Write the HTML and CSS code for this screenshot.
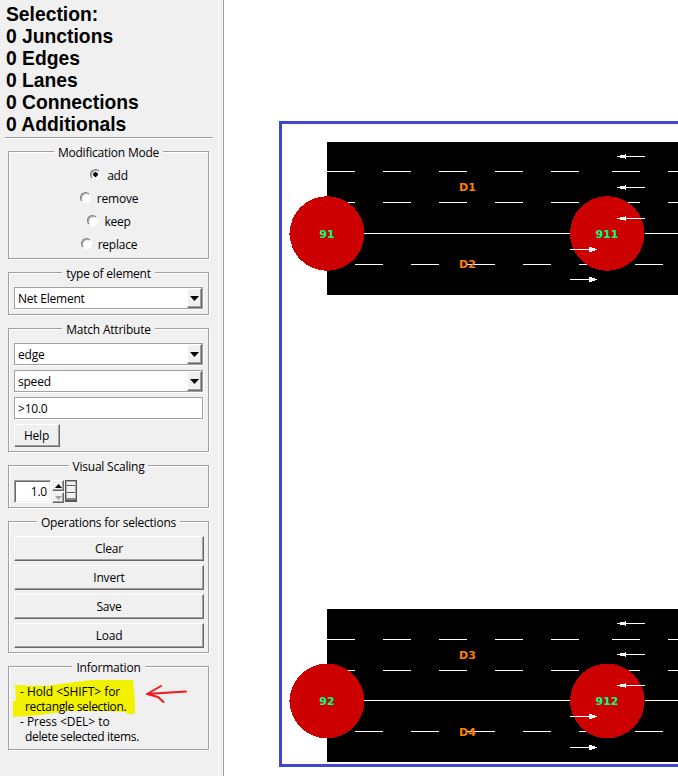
FILE: index.html
```html
<!DOCTYPE html>
<html lang="en">
<head>
<meta charset="utf-8">
<title>Selection</title>
<link rel="stylesheet" href="styles.css">
</head>
<body>
<div class="app">
  <aside class="sidebar">
    <div class="summary">
      <div>Selection:</div>
      <div>0 Junctions</div>
      <div>0 Edges</div>
      <div>0 Lanes</div>
      <div>0 Connections</div>
      <div>0 Additionals</div>
    </div>

    <section class="group mode">
      <h2><span>Modification Mode</span></h2>
      <div class="radio"><i class="dot on"></i><span>add</span></div>
      <div class="radio"><i class="dot"></i><span>remove</span></div>
      <div class="radio"><i class="dot"></i><span>keep</span></div>
      <div class="radio"><i class="dot"></i><span>replace</span></div>
    </section>

    <section class="group type">
      <h2><span>type of element</span></h2>
      <div class="field"><span>Net Element</span><b class="drop"><svg width="9" height="5"><path d="M0 0h9L4.5 5z"/></svg></b></div>
    </section>

    <section class="group match">
      <h2><span>Match Attribute</span></h2>
      <div class="field"><span>edge</span><b class="drop"><svg width="9" height="5"><path d="M0 0h9L4.5 5z"/></svg></b></div>
      <div class="field"><span>speed</span><b class="drop"><svg width="9" height="5"><path d="M0 0h9L4.5 5z"/></svg></b></div>
      <div class="field"><span>&gt;10.0</span></div>
      <div class="button help">Help</div>
    </section>

    <section class="group scaling">
      <h2><span>Visual Scaling</span></h2>
      <div class="spinner">
        <div class="number">1.0</div>
        <div class="steps">
          <b><svg width="7" height="4"><path d="M0 4h7L3.5 0z"/></svg></b>
          <b class="off"><svg width="7" height="4"><path d="M0 0h7L3.5 4z"/></svg></b>
        </div>
        <div class="wheel"><svg width="12" height="22" shape-rendering="crispEdges">
          <rect width="12" height="22" fill="#555"/>
          <rect x="2" y="2" width="8" height="16" fill="#f0f0f0"/>
          <path fill="#aaa" d="M1 1h10v1H1zM10 2h1v18h-1zM1 2h1v18H1z"/>
          <path fill="#555" d="M2 5h8v1H2zM2 12h8v1H2z"/>
          <path fill="#fff" d="M2 6h8v1H2zM2 13h8v1H2z"/>
          <path fill="#888" d="M1 18h10v2H1z"/>
        </svg></div>
      </div>
    </section>

    <section class="group ops">
      <h2><span>Operations for selections</span></h2>
      <div class="button">Clear</div>
      <div class="button">Invert</div>
      <div class="button">Save</div>
      <div class="button">Load</div>
    </section>

    <section class="group info">
      <h2><span>Information</span></h2>
      <svg class="marks" width="190" height="48" viewBox="10 680 190 48">
        <path fill="#f2f200" d="M15 685l31 1 21-3 25-3 41 0 2 21v13l-8 0-1-2-21-1-37 0-28 4-27 2V702l3-2z"/>
        <path fill="none" stroke="#f0181c" stroke-width="2" stroke-linecap="round" stroke-linejoin="round" d="M186 691.500L170 692.500L147 694M161 686L147 694L158 697L163.500 702"/>
      </svg>
      <p>- Hold &lt;SHIFT&gt; for</p>
      <p class="in">rectangle selection.</p>
      <p>- Press &lt;DEL&gt; to</p>
      <p class="in">delete selected items.</p>
    </section>
  </aside>

  <main class="network">
    <svg width="454" height="776" viewBox="224 0 454 776">
      <defs>
        <path id="left" d="M0 0h28v1H0zM3-1h6v3H3zM8-2h1v5H8z"/>
        <path id="right" d="M0 0h27v1H0zM19-2h3v1h3v3h-3v1h-3z"/>
        <path id="lanes" d="M327 29h28v1h-28zM383 29h28v1h-28zM439 29h28v1h-28zM495 29h28v1h-28zM551 29h28v1h-28zM612 29h28v1h-28zM668 29h28v1h-28zM327 60h28v1h-28zM383 60h28v1h-28zM439 60h28v1h-28zM495 60h28v1h-28zM551 60h28v1h-28zM612 60h28v1h-28zM668 60h28v1h-28z"/>
        <path id="back" d="M355 0h28v1h-28zM411 0h28v1h-28zM467 0h28v1h-28zM523 0h28v1h-28zM579 0h28v1h-28zM635 0h28v1h-28z"/>
      </defs>
      <g shape-rendering="crispEdges">
        <path fill="#3f48cc" d="M279 121h399v3H282V764h396v3H279z"/>
        <rect x="327" y="142" width="351" height="153"/>
        <rect x="327" y="609" width="351" height="153"/>
        <g fill="#fff">
          <use href="#lanes" y="142"/><rect x="327" y="233" width="351" height="1"/><use href="#back" y="264"/>
          <use href="#lanes" y="610"/><rect x="327" y="700" width="351" height="1"/><use href="#back" y="731"/>
        </g>
        <g fill="#c00">
          <path d="M289 233h2v2h-2zM289 700h2v2h-2z"/>
          <circle cx="327" cy="233.500" r="37.300"/>
          <circle cx="607.300" cy="233.500" r="37.300"/>
          <circle cx="327" cy="701" r="37.300"/>
          <circle cx="607.300" cy="701" r="37.300"/>
        </g>
        <g fill="#fff">
          <use href="#left" x="617" y="156"/><use href="#left" x="617" y="187"/><use href="#left" x="617" y="218"/>
          <use href="#right" x="570" y="249"/><use href="#right" x="570" y="279"/>
          <use href="#left" x="617" y="623"/><use href="#left" x="617" y="654"/><use href="#left" x="617" y="685"/>
          <use href="#right" x="570" y="716"/><use href="#right" x="570" y="747"/>
        </g>
      </g>
      <g class="node">
        <text x="327" y="238">91</text><text x="607" y="238">911</text>
        <text x="327" y="705">92</text><text x="607" y="705">912</text>
      </g>
      <g class="edge">
        <text x="467.500" y="191">D1</text><text x="467.500" y="268">D2</text>
        <text x="467.500" y="659">D3</text><text x="467.500" y="736">D4</text>
      </g>
    </svg>
  </main>
</div>
</body>
</html>
```

FILE: styles.css
```css
* { box-sizing: border-box; }
body { margin: 0; background: #fff; overflow: hidden; }
svg { display: block; }
.app { display: flex; width: 678px; height: 776px; }

.sidebar {
  width: 224px;
  padding: 4px 0 0 5px;
  background: #f0f0f0;
  border-right: 1px solid #a0a0a0;
  box-shadow: inset -4px 0 0 #f0f0f0, inset -5px 0 0 #fff;
  font: 12px/15px "Open Sans", "Noto Sans", sans-serif;
  letter-spacing: -0.22px;
  color: #000;
}
.summary {
  width: 208px;
  height: 134px;
  margin-bottom: 13px;
  padding-left: 1px;
  border-bottom: 1px solid #a0a0a0;
  box-shadow: 0 1px 0 #fff;
  font: bold 19.300px/22px "Liberation Sans", sans-serif;
  letter-spacing: 0;
}

.group {
  width: 201px;
  margin: 0 0 13px 3px;
  padding: 0 5px;
  border: 1px solid #a0a0a0;
  box-shadow: 1px 1px 0 #fff, inset 1px 1px 0 #fff;
}
.group h2 {
  display: flex;
  justify-content: center;
  height: 15px;
  margin: -7px 0 4px;
  font: inherit;
}
.group h2 span { padding: 0 4px; background: #f0f0f0; }
.mode { height: 108px; }
.type, .scaling { height: 43px; }
.match { height: 124px; }
.ops { height: 132px; }
.info { height: 84px; position: relative; }

.radio {
  display: flex;
  justify-content: center;
  align-items: center;
  gap: 6px;
  height: 23px;
  padding-left: 1px;
}
.dot {
  width: 11px;
  height: 11px;
  margin-top: -2px;
  border: 1px solid;
  border-color: #808080 #fff #fff #808080;
  border-radius: 50%;
  background: #fff;
  box-shadow: inset 1px 1px 0 #a0a0a0;
}
.dot.on { background: radial-gradient(circle, #000 2px, #fff 2.500px); }

.group h2 + .field { margin-top: 6px; }
.field {
  display: flex;
  justify-content: space-between;
  align-items: center;
  width: 189px;
  height: 22px;
  margin-bottom: 5px;
  padding-left: 3px;
  border: 1px solid #a0a0a0;
  box-shadow: 1px 1px 0 #fff;
  background: #fff;
}
.field span { padding-top: 1px; }
.drop {
  display: flex;
  align-items: center;
  justify-content: center;
  width: 15px;
  height: 20px;
}
.drop, .button, .steps b {
  background: #f0f0f0;
  border: 1px solid;
  border-color: #fff #696969 #696969 #fff;
  box-shadow: inset -1px -1px 0 #a0a0a0;
}
.button {
  width: 190px;
  height: 25px;
  margin-bottom: 4px;
  padding-top: 4px;
  text-align: center;
}
.group h2 + .button { margin-top: 6px; }
.help { width: 46px; height: 23px; padding: 3px 1px 0 0; }

.group h2 + .spinner { margin-top: 6px; }
.spinner { display: flex; }
.number {
  width: 37px;
  height: 23px;
  padding: 3px 3px 0 0;
  text-align: right;
  background: #fff;
  border: 1px solid;
  border-color: #a0a0a0 #fff #fff #a0a0a0;
  box-shadow: inset 1px 1px 0 #696969, inset -1px -1px 0 #f0f0f0;
}
.steps { display: grid; gap: 1px; margin: 0 1px; }
.steps b {
  display: flex;
  align-items: center;
  justify-content: center;
  width: 12px;
  height: 11px;
}
.steps svg { flex: none; }
.off svg { fill: #a0a0a0; }

.info p { position: relative; margin: 0 0 0 6px; letter-spacing: -0.05px; }
.info h2 { margin-bottom: 9px; }
.info .in { margin-left: 11px; letter-spacing: -0.34px; }
.marks { position: absolute; left: 1px; top: 13px; }

.network { width: 454px; }
.network text { font: bold 11px "DejaVu Sans", sans-serif; text-anchor: middle; }
.node { fill: #00ff80; }
.edge { fill: #ff8000; }
```
